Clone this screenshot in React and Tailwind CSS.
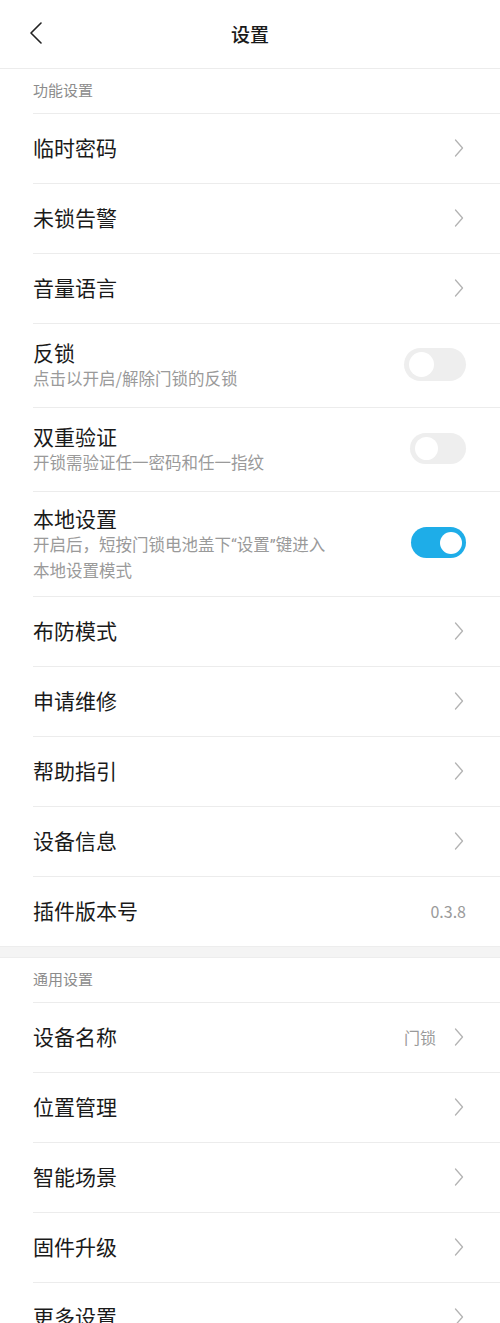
import React from 'react';

const FONT = { fontFamily: '"Noto Sans CJK SC", "Noto Sans", sans-serif' };

const Chevron = () => (
  <svg width="10" height="18" viewBox="0 0 10 18" className="shrink-0">
    <polyline points="1.5,1 8.5,9 1.5,17" fill="none" stroke="#b3b3b3" strokeWidth="1.3" strokeLinejoin="round" strokeLinecap="round" />
  </svg>
);

function Toggle({ on, w = 56, h = 31 }) {
  if (on) {
    return (
      <div className="w-[55px] h-[31px] rounded-full bg-[#1eade8] flex items-center justify-end pr-[4px] shrink-0">
        <div className="w-[22px] h-[22px] rounded-full bg-white" />
      </div>
    );
  }
  return (
    <div style={{ width: w, height: h }} className="rounded-full bg-[#eeeeee] flex items-center pl-[5px] shrink-0">
      <div style={{ width: h - 8, height: h - 8 }} className="rounded-full bg-white" />
    </div>
  );
}

function SectionLabel({ children }) {
  return (
    <div className="ml-[33px] h-[45px] pb-[1px] border-b border-[#ececec] flex items-center text-[15px] text-[#8c8c8c]">
      {children}
    </div>
  );
}

function Row({ title, value, last }) {
  return (
    <div className={`ml-[33px] h-[70px] pb-[2px] flex items-center justify-between pr-[36px] ${last ? '' : 'border-b border-[#ececec]'}`}>
      <span className="text-[21px] text-[#1a1a1a]">{title}</span>
      <div className="flex items-center gap-[18px]">
        {value && <span className="text-[16px] text-[#9a9a9a]">{value}</span>}
        <Chevron />
      </div>
    </div>
  );
}

function SwitchRow({ title, sub, on, h, tw, th }) {
  return (
    <div style={{ height: h }} className="ml-[33px] pb-[3px] border-b border-[#ececec] flex items-center justify-between pr-[34px]">
      <div className="flex flex-col">
        <span className="text-[21px] leading-[28px] text-[#1a1a1a]">{title}</span>
        {sub.map((s, i) => (
          <span key={i} className="text-[16.5px] leading-[24px] text-[#9a9a9a]">{s}</span>
        ))}
      </div>
      <Toggle on={on} w={tw} h={th} />
    </div>
  );
}

const Q = ({ children }) => <span style={{ fontFamily: 'Roboto, sans-serif' }}>{children}</span>;

export default function App() {
  return (
    <div className="w-[500px] h-[1323px] bg-white overflow-hidden" style={FONT}>
      <div className="h-[69px] border-b border-[#ececec] relative flex items-center justify-center">
        <svg width="14" height="22" viewBox="0 0 14 22" className="absolute left-[29px] top-[22px]">
          <polyline points="12,1 2,11 12,21" fill="none" stroke="#222" strokeWidth="1.6" strokeLinejoin="round" strokeLinecap="round" />
        </svg>
        <span className="text-[19px] font-medium text-[#1a1a1a]">设置</span>
      </div>

      <SectionLabel>功能设置</SectionLabel>
      <Row title="临时密码" />
      <Row title="未锁告警" />
      <Row title="音量语言" />
      <SwitchRow title="反锁" sub={['点击以开启/解除门锁的反锁']} h={84} tw={62} th={33} />
      <SwitchRow title="双重验证" sub={['开锁需验证任一密码和任一指纹']} h={84} tw={56} th={31} />
      <SwitchRow
        title="本地设置"
        sub={[<>开启后，短按门锁电池盖下<Q>“</Q>设置<Q>”</Q>键进入</>, '本地设置模式']}
        h={105}
        on
      />
      <Row title="布防模式" />
      <Row title="申请维修" />
      <Row title="帮助指引" />
      <Row title="设备信息" />
      <div className="ml-[33px] h-[69px] pb-[2px] flex items-center justify-between pr-[34px]">
        <span className="text-[21px] text-[#1a1a1a]">插件版本号</span>
        <span className="text-[16px] text-[#9a9a9a]">0.3.8</span>
      </div>

      <div className="h-[12px] bg-[#f4f4f4] border-y border-[#ededed]" />

      <SectionLabel>通用设置</SectionLabel>
      <Row title="设备名称" value="门锁" />
      <Row title="位置管理" />
      <Row title="智能场景" />
      <Row title="固件升级" />
      <Row title="更多设置" />
    </div>
  );
}
